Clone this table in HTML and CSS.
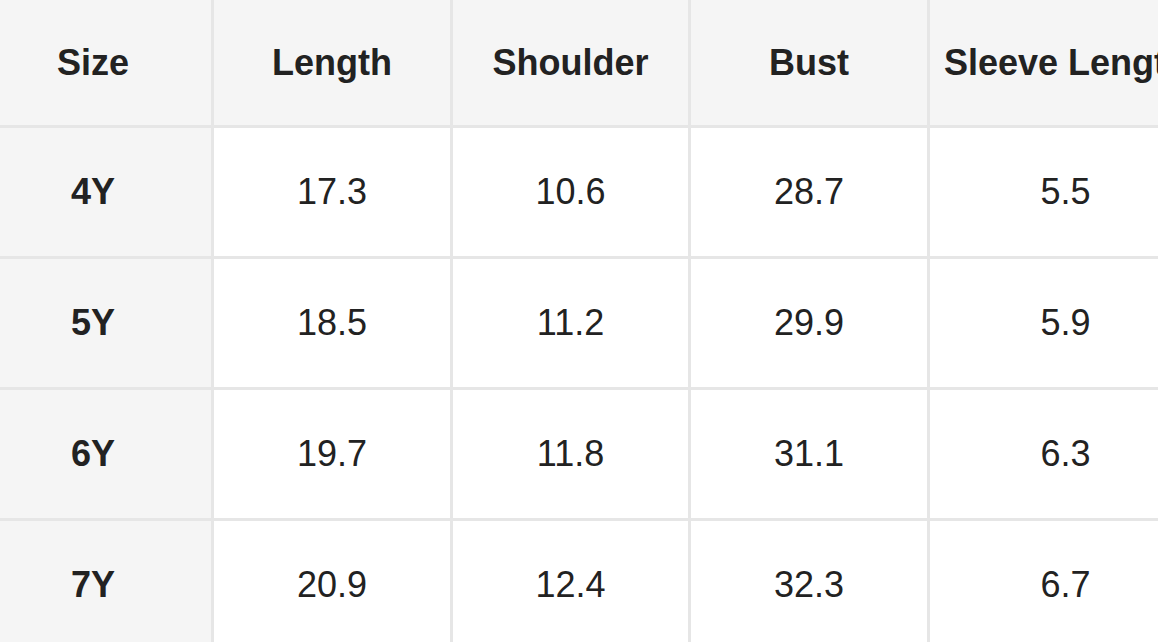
FILE: index.html
```html
<!DOCTYPE html>
<html lang="en">
<head>
<meta charset="utf-8">
<title>Size chart</title>
<link rel="stylesheet" href="styles.css">
</head>
<body>
<div class="frame">
  <table class="chart">
    <colgroup>
      <col class="c1"><col class="c2"><col class="c3"><col class="c4"><col class="c5">
    </colgroup>
    <thead>
      <tr class="head">
        <th>Size</th><th>Length</th><th>Shoulder</th><th>Bust</th><th>Sleeve Length</th>
      </tr>
    </thead>
    <tbody>
      <tr><th>4Y</th><td>17.3</td><td>10.6</td><td>28.7</td><td>5.5</td></tr>
      <tr><th>5Y</th><td>18.5</td><td>11.2</td><td>29.9</td><td>5.9</td></tr>
      <tr><th>6Y</th><td>19.7</td><td>11.8</td><td>31.1</td><td>6.3</td></tr>
      <tr><th>7Y</th><td>20.9</td><td>12.4</td><td>32.3</td><td>6.7</td></tr>
    </tbody>
  </table>
</div>
</body>
</html>
```
FILE: styles.css
```css
html, body {
  margin: 0;
  padding: 0;
  background: #ffffff;
  overflow: hidden;
}
.frame {
  width: 1158px;
  height: 642px;
  overflow: hidden;
}
.chart {
  border-collapse: separate;
  border-spacing: 0;
  table-layout: fixed;
  width: 1229px;
  margin-left: -25px;
  font-family: "Liberation Sans", Arial, sans-serif;
  font-size: 36px;
  color: #222222;
}
.c1 { width: 239px; }
.c2 { width: 239px; }
.c3 { width: 238px; }
.c4 { width: 239px; }
.c5 { width: 274px; }
.chart th,
.chart td {
  box-sizing: border-box;
  padding: 0 12px;
  height: 131px;
  text-align: center;
  vertical-align: middle;
  white-space: nowrap;
  border-right: 3px solid #e6e6e6;
  border-bottom: 3px solid #e6e6e6;
  background: #ffffff;
  font-weight: 400;
}
.chart th {
  font-weight: 700;
  background: #f5f5f5;
}
.chart .head th {
  height: 128px;
}
.chart .head th:last-child {
  text-align: left;
  padding-left: 14px;
}
```
